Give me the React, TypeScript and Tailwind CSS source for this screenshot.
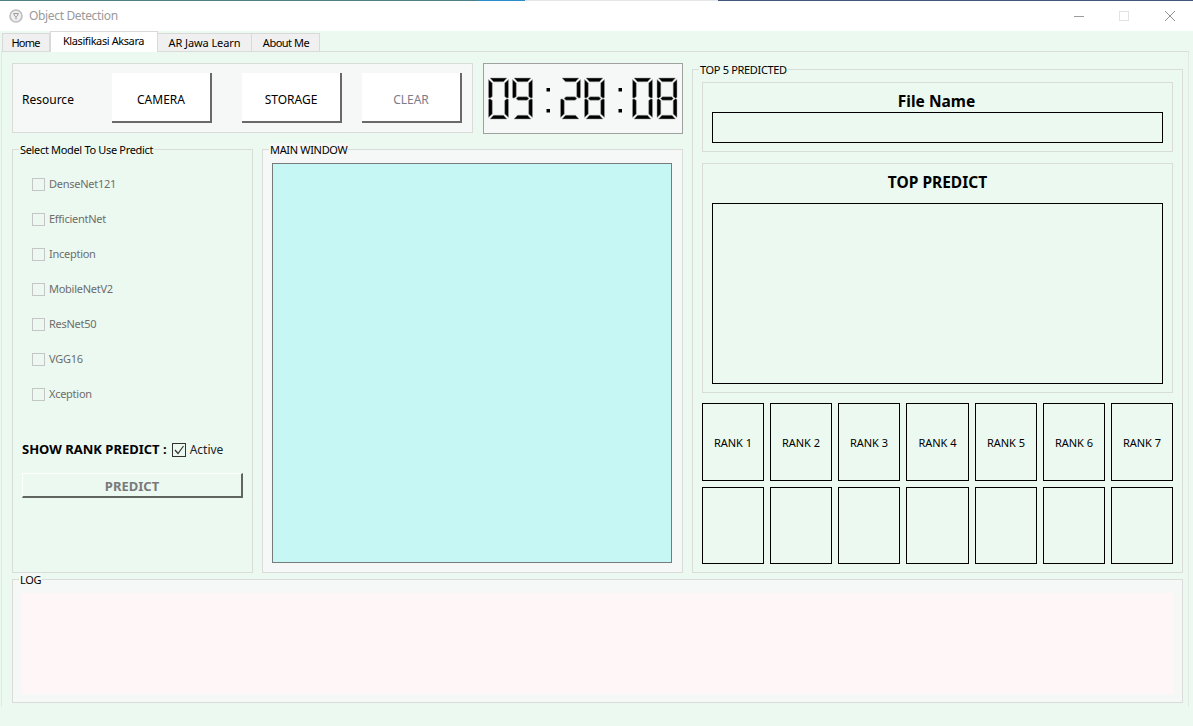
import React from "react";

const FONT = "font-['Noto_Sans','Open_Sans',sans-serif]";

const SEGMENTS: Record<string, string> = {
  a: "1.5,0 18.5,0 15,3.8 5,3.8",
  b: "20,1.5 20,19.5 18.5,20.3 16.2,18.5 16.2,5",
  c: "20,21.5 20,39.5 16.2,36 16.2,22.5 18.5,20.7",
  d: "1.5,41 18.5,41 15,37.2 5,37.2",
  e: "0,21.5 0,39.5 3.8,36 3.8,22.5 1.5,20.7",
  f: "0,1.5 0,19.5 1.5,20.3 3.8,18.5 3.8,5",
  g: "3.5,20.5 5.5,18.8 14.5,18.8 16.5,20.5 14.5,22.2 5.5,22.2",
};

const DIGITS: Record<string, string> = {
  "0": "abcdef",
  "2": "abged",
  "8": "abcdefg",
  "9": "abcdfg",
};

const LcdDigit = ({ value, x }: { value: string; x: number }) => (
  <g transform={`translate(${x} 0)`}>
    {DIGITS[value].split("").map((s) => (
      <polygon key={s} points={SEGMENTS[s]} fill="#000" stroke="#a3a3a3" strokeWidth="0.5" />
    ))}
  </g>
);

const Clock = () => (
  <div className="w-[200px] h-[71px] bg-[#f5f8f6] border border-[#a0a0a0] flex items-center justify-center">
    <svg width="198" height="69" viewBox="0 0 198 69">
      <g transform="translate(4.5 14)">
        <LcdDigit value="0" x={0} />
        <LcdDigit value="9" x={24} />
        <rect x="58" y="10" width="3.5" height="3.5" fill="#000" />
        <rect x="58" y="31" width="3.5" height="3.5" fill="#000" />
        <LcdDigit value="2" x={72} />
        <LcdDigit value="8" x={96} />
        <rect x="130" y="10" width="3.5" height="3.5" fill="#000" />
        <rect x="130" y="31" width="3.5" height="3.5" fill="#000" />
        <LcdDigit value="0" x={144} />
        <LcdDigit value="8" x={168.5} />
      </g>
    </svg>
  </div>
);

const Group = ({
  title,
  className,
  children,
}: {
  title: string;
  className: string;
  children?: React.ReactNode;
}) => (
  <div className={`relative border border-[#d9dcd9] ${className}`}>
    <span className="absolute left-[6px] top-[-7px] px-px bg-inherit text-[11px] leading-[14px] tracking-[-0.33px] text-black whitespace-nowrap">
      {title}
    </span>
    {children}
  </div>
);

const HardButton = ({ label, muted }: { label: string; muted?: boolean }) => (
  <button
    className={`w-[100px] h-[50px] pt-[6px] bg-white border-r-2 border-b-2 border-[#696969] text-[12px] ${
      muted ? "text-[#7d7d8a]" : "text-black"
    }`}
  >
    {label}
  </button>
);

const ModelCheck = ({ label }: { label: string }) => (
  <div className="flex items-center h-[35px] gap-[4px]">
    <span className="w-[13px] h-[13px] border border-[#c4c7c5] bg-[#edf8f1]" />
    <span className="text-[11px] tracking-[-0.27px] text-[#6d6d6d]">{label}</span>
  </div>
);

const RankCell = ({ label, w }: { label?: string; w: string }) => (
  <div className={`${w} h-full pt-[2px] border border-black flex items-center justify-center text-[11px] text-black`}>
    {label}
  </div>
);

const RANKS = ["RANK 1", "RANK 2", "RANK 3", "RANK 4", "RANK 5", "RANK 6", "RANK 7"];

export default function App() {
  return (
    <div className={`w-[1193px] h-[726px] overflow-hidden bg-[#ecf9f0] flex flex-col ${FONT}`}>
      {/* title bar */}
      <div className="h-[31px] bg-white flex flex-col">
        <div className="h-px flex">
          <div className="w-[477px] bg-[#4d7f86]" />
          <div className="w-[48px] bg-[#2b8ccb]" />
          <div className="w-[193px] bg-[#e4e6e8]" />
          <div className="flex-1 bg-[#43597a]" />
        </div>
        <div className="flex-1 flex items-center pl-[9px]">
          <svg width="14" height="14" viewBox="0 0 14 14" className="mr-[6px]">
            <circle cx="7" cy="7" r="6" fill="#efefef" stroke="#bdbdbd" strokeWidth="1.6" />
            <path d="M4.5 4.5h5M5 4.5c0 2 1 3 2 3s2-1 2-3M7 7.5v3" fill="none" stroke="#9a9a9a" />
          </svg>
          <span className="text-[12px] tracking-[-0.35px] text-[#9a9a9a]">Object Detection</span>
          <div className="ml-auto flex items-center">
            <div className="w-[10px] h-px bg-[#9c9c9c] mr-[35px]" />
            <div className="w-[10px] h-[10px] border border-[#e3e3e3] mr-[35px]" />
            <svg width="12" height="12" viewBox="0 0 12 12" className="mr-[17px]">
              <path d="M1 1l10 10M11 1L1 11" stroke="#8f8f8f" strokeWidth="1" />
            </svg>
          </div>
        </div>
      </div>

      {/* tabs */}
      <div className="h-[20px] flex items-end pl-[2px] relative z-10 text-[11px] text-black">
        <div className="w-[48px] h-[18px] pt-[2px] pr-px bg-[#f0f0f0] border border-b-0 border-[#d9d9d9] flex items-center justify-center tracking-[-0.8px]">Home</div>
        <div className="w-[108px] h-[21px] mb-[-1px] pb-[2px] pr-px bg-white border border-b-0 border-[#d9d9d9] flex items-center justify-center tracking-[-0.4px]">Klasifikasi Aksara</div>
        <div className="w-[94px] h-[18px] pt-[2px] bg-[#f0f0f0] border border-b-0 border-l-0 border-[#d9d9d9] flex items-center justify-center tracking-[-0.08px]">AR Jawa Learn</div>
        <div className="w-[68px] h-[18px] pt-[2px] pl-px bg-[#f0f0f0] border border-b-0 border-l-0 border-[#d9d9d9] flex items-center justify-center tracking-[-0.5px]">About Me</div>
      </div>

      {/* tab page */}
      <div className="ml-px w-[1188px] h-[656px] border border-b-0 border-t-[#d9dcd9] border-x-[#e4e8e4] pl-[10px] pt-[11px]">
        <div className="flex gap-[9px]">
          {/* left + middle */}
          <div className="w-[671px] flex flex-col">
            <div className="flex gap-[10px] h-[71px]">
              <div className="w-[461px] h-[70px] bg-[#f5f8f6] border border-[#d9dcd9] flex items-center pl-[9px]">
                <span className="text-[12px] pt-[3px] text-black w-[90px]">Resource</span>
                <HardButton label="CAMERA" />
                <div className="w-[30px]" />
                <HardButton label="STORAGE" />
                <div className="w-[20px]" />
                <HardButton label="CLEAR" muted />
              </div>
              <Clock />
            </div>
            <div className="flex gap-[9px] mt-[15px] h-[424px]">
              <Group title="Select Model To Use Predict" className="w-[241px] bg-[#ecf9f0] pl-[19px] pt-[17px]">
                <ModelCheck label="DenseNet121" />
                <ModelCheck label="EfficientNet" />
                <ModelCheck label="Inception" />
                <ModelCheck label="MobileNetV2" />
                <ModelCheck label="ResNet50" />
                <ModelCheck label="VGG16" />
                <ModelCheck label="Xception" />
                <div className="flex items-center mt-[28px] ml-[-10px] h-[20px]">
                  <span className="text-[13px] font-bold text-black mr-[5px]">SHOW RANK PREDICT :</span>
                  <span className="w-[14px] h-[14px] border border-[#333] flex items-center justify-center mr-[4px]">
                    <svg width="12" height="12" viewBox="0 0 12 12">
                      <path d="M2 6l3 3.5L10.5 2" fill="none" stroke="#333" strokeWidth="1.2" />
                    </svg>
                  </span>
                  <span className="text-[12px] text-[#222]">Active</span>
                </div>
                <button className="block mt-[13px] ml-[-10px] w-[221px] h-[25px] pt-[3px] border-t border-l border-t-white border-l-white border-r-2 border-b-2 border-r-[#5f665f] border-b-[#5f665f] text-[13px] font-bold text-[#7a7a7a]">
                  PREDICT
                </button>
              </Group>
              <Group title="MAIN WINDOW" className="w-[421px] bg-[#f5f8f6] pl-[9px] pt-[13px]">
                <div className="w-[400px] h-[400px] bg-[#c6f7f5] border border-[#767b7b]" />
              </Group>
            </div>
          </div>

          {/* top 5 */}
          <Group title="TOP 5 PREDICTED" className="mt-[6px] w-[491px] h-[504px] bg-[#ecf9f0] px-[9px] pt-[12px]">
            <div className="h-[70px] border border-[#d9dcd9] px-[9px] flex flex-col">
              <div className="h-[29px] pr-[2px] pb-px flex items-end justify-center text-[15.5px] leading-[20px] font-bold text-black">File Name</div>
              <div className="h-[31px] border border-black" />
            </div>
            <div className="mt-[11px] h-[230px] border border-[#d9dcd9] px-[9px] flex flex-col">
              <div className="h-[39px] pb-[2px] flex items-center justify-center text-[15.5px] font-bold text-black">TOP PREDICT</div>
              <div className="h-[181px] border border-black" />
            </div>
            <div className="mt-[10px] flex justify-between h-[78px]">
              {RANKS.map((r, i) => (
                <RankCell key={r} label={r} w={i === 3 ? "w-[63px]" : "w-[62px]"} />
              ))}
            </div>
            <div className="mt-[6px] flex justify-between h-[77px]">
              {RANKS.map((r, i) => (
                <RankCell key={r} w={i === 3 ? "w-[63px]" : "w-[62px]"} />
              ))}
            </div>
          </Group>
        </div>

        <Group title="LOG" className="mt-[6px] w-[1171px] h-[124px] bg-[#f5f8f6] pl-[9px] pt-[13px]">
          <div className="w-[1151px] h-[101px] bg-[#fef6f7]" />
        </Group>
      </div>
    </div>
  );
}
